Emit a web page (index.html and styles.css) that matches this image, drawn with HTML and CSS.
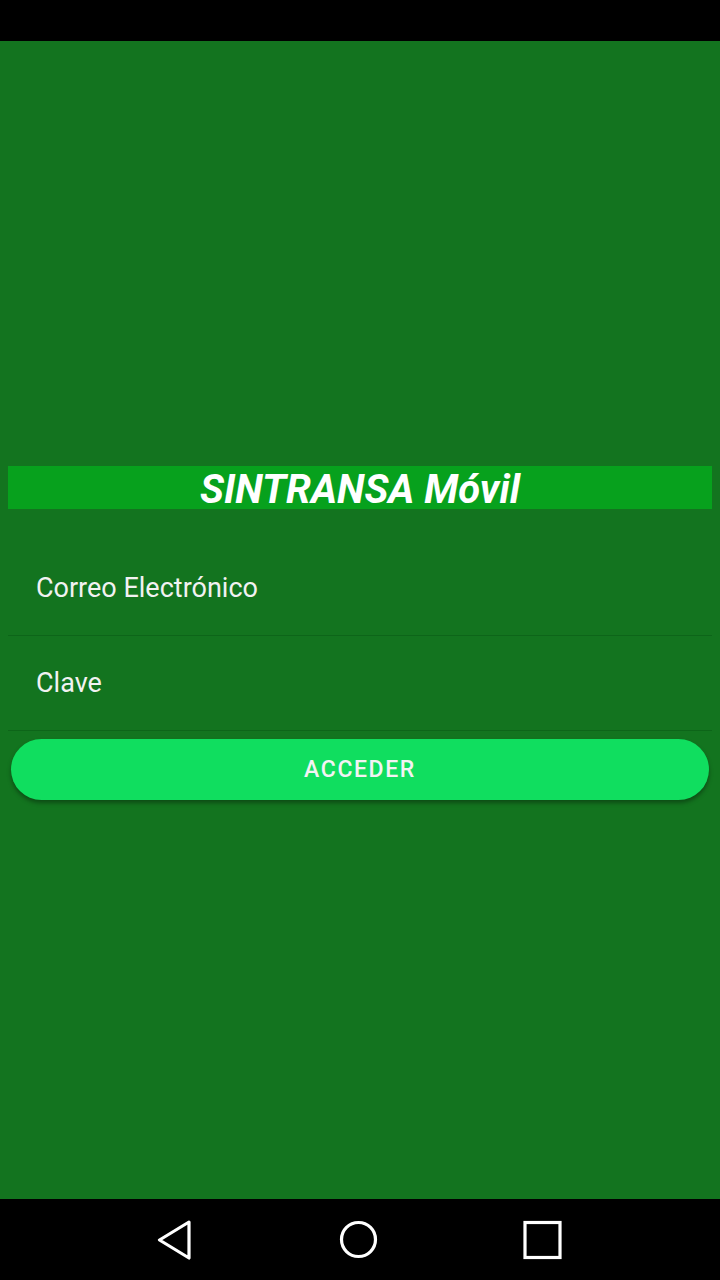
FILE: index.html
```html
<!DOCTYPE html>
<html lang="es">
<head>
<meta charset="utf-8">
<title>SINTRANSA Móvil</title>
<link rel="stylesheet" href="styles.css">
</head>
<body>
<div class="screen">
  <div class="status-bar"></div>
  <main class="app">
    <div class="spacer-top"></div>
    <h1 class="title">SINTRANSA Móvil</h1>
    <form class="form">
      <div class="field"><span class="placeholder">Correo Electrónico</span></div>
      <div class="field"><span class="placeholder">Clave</span></div>
      <button type="button" class="btn">ACCEDER</button>
    </form>
  </main>
  <nav class="nav-bar">
    <svg class="nav-icon" width="40" height="40" viewBox="0 0 40 40"><path d="M33 2 L3.5 20 L33 38 Z" fill="none" stroke="#fff" stroke-width="3.2" stroke-linejoin="round"/></svg>
    <svg class="nav-icon" width="40" height="40" viewBox="0 0 40 40"><circle cx="19.5" cy="19.5" r="17" fill="none" stroke="#fff" stroke-width="3.2"/></svg>
    <svg class="nav-icon" width="40" height="40" viewBox="0 0 40 40"><rect x="3" y="2.5" width="35" height="35" fill="none" stroke="#fff" stroke-width="3.2"/></svg>
  </nav>
</div>
</body>
</html>
```

FILE: styles.css
```css
html, body {
  margin: 0;
  padding: 0;
}
body {
  width: 720px;
  height: 1280px;
  overflow: hidden;
  font-family: Roboto, "Noto Sans", sans-serif;
  background: #000;
}
.screen {
  display: flex;
  flex-direction: column;
  height: 1280px;
}
.status-bar {
  height: 41px;
  background: #000;
  flex: none;
}
.app {
  flex: 1;
  background: #13741f;
  padding: 0 8px;
  display: flex;
  flex-direction: column;
}
.spacer-top {
  height: 425px;
  flex: none;
}
.title {
  margin: 0;
  height: 43px;
  background: #07a11d;
  color: #fff;
  font-size: 40px;
  font-weight: 700;
  font-style: italic;
  text-align: center;
  line-height: 47px;
}
.form {
  display: flex;
  flex-direction: column;
  margin-top: 32px;
}
.field {
  height: 94px;
  border-bottom: 1px solid #0d6519;
  display: flex;
  align-items: center;
  padding-left: 28px;
}
.placeholder {
  color: #f2f2f2;
  font-size: 27px;
}
.btn {
  margin: 8px 3px 0 3px;
  height: 61px;
  border: none;
  border-radius: 31px;
  background: #10de5f;
  color: #f3f3f3;
  font-family: Roboto, sans-serif;
  font-size: 23px;
  font-weight: 500;
  letter-spacing: 1.6px;
  box-shadow: 0 3px 4px rgba(0, 0, 0, 0.35);
}
.nav-bar {
  height: 81px;
  background: #000;
  flex: none;
  display: flex;
  align-items: center;
  justify-content: space-between;
  padding: 0 158px 0 156px;
}
.nav-icon {
  display: block;
}
```
